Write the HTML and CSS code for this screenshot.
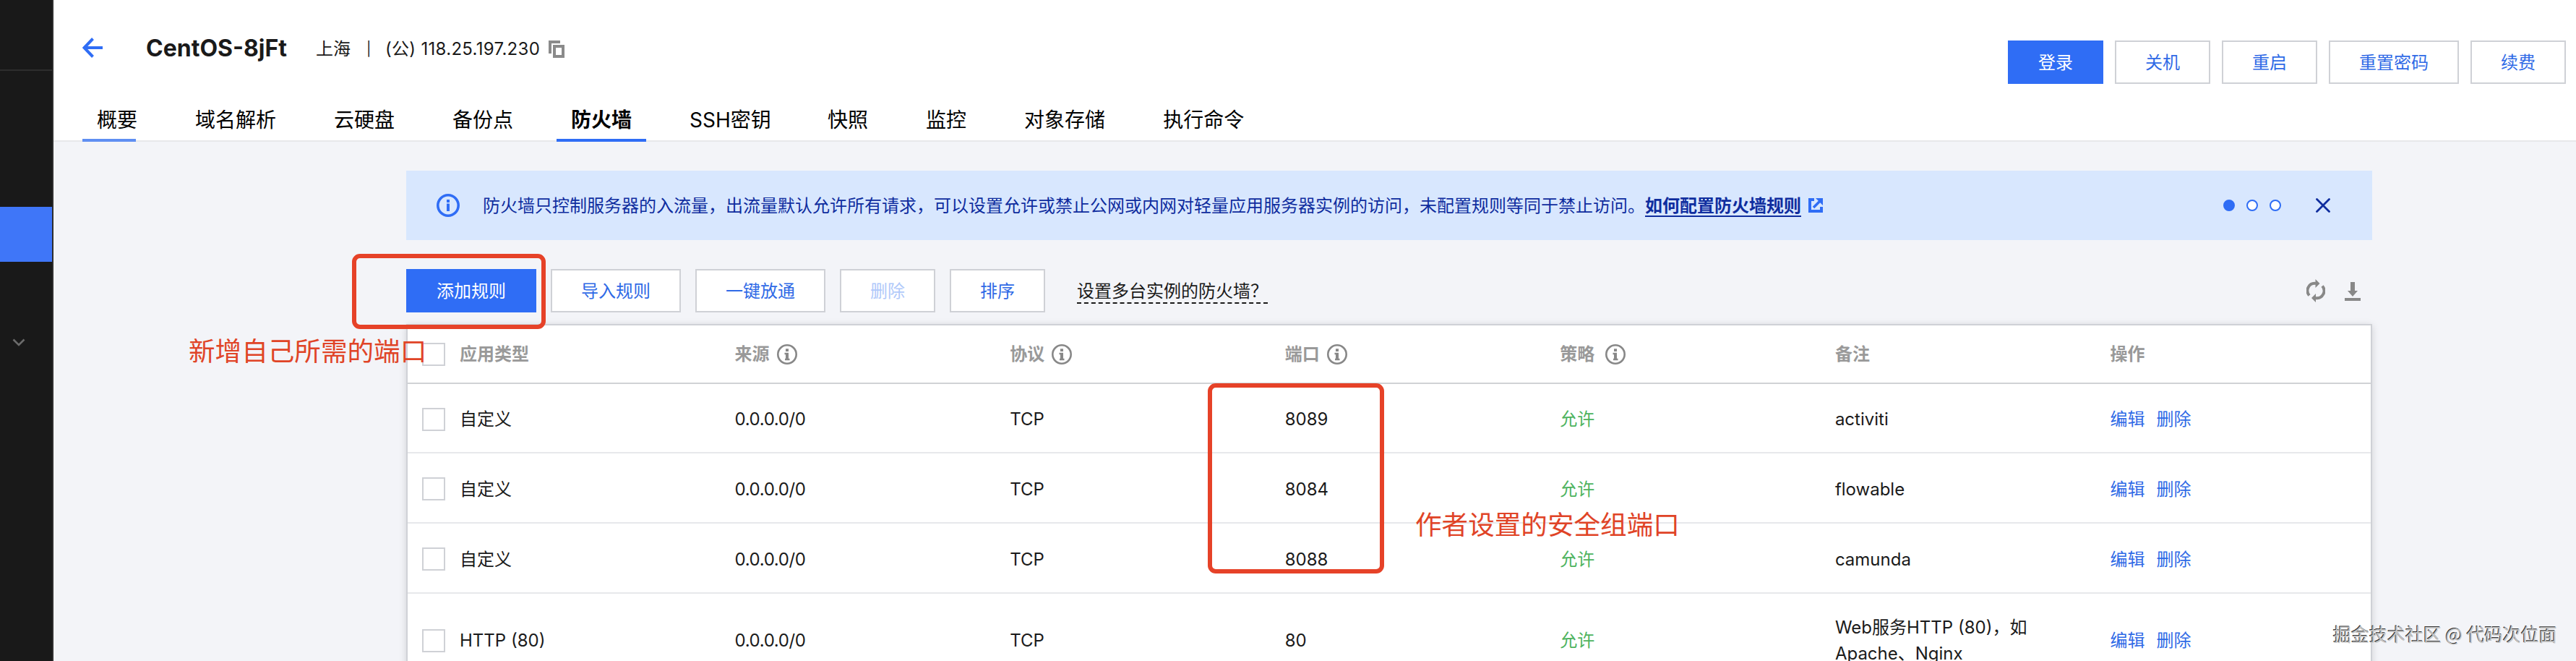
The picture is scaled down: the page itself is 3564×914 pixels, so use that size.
FILE: index.html
```
<!DOCTYPE html>
<html lang="zh-CN">
<head>
  <meta charset="UTF-8">
  <title>防火墙 - CentOS-8jFt</title>
  <link rel="stylesheet" href="styles.css">
</head>
<body>
  <!-- shared icons -->
  <svg class="sprite" width="0" height="0">
    <symbol id="icon-info" viewBox="0 0 28 28">
      <circle cx="14" cy="14" r="12.7" fill="none" stroke="currentColor" stroke-width="2.6"/>
      <path d="M12 6.200h4v3.800h-4zM10.500 11.800H16v8h1.500v2.400h-6.500v-2.400h1v-5.600h-1.500z" fill="currentColor"/>
    </symbol>
  </svg>

  <div class="app">
    <aside class="sidebar">
      <div class="side-top"></div>
      <div class="side-group"></div>
      <div class="side-active"></div>
      <svg class="side-arrow" width="18" height="12" viewBox="0 0 18 12"><path d="M1.500 1.500L9 9l7.500-7.500" fill="none" stroke="#6b6b6b" stroke-width="2.600"/></svg>
    </aside>

    <main class="main">
      <header class="header">
        <div class="header-row">
          <svg class="back" width="28" height="28" viewBox="0 0 28 28"><path d="M14.500 1.500L2.500 14l12 12.500M2.500 14H28" fill="none" stroke="#2f6df5" stroke-width="4"/></svg>
          <h1>CentOS-8jFt</h1>
          <div class="meta">
            <span class="region">上海</span>
            <span class="bar">|</span>
            <span class="ip">(公) 118.25.197.230</span>
            <svg width="22" height="24" viewBox="0 0 22 24"><path d="M2 18V2h14" fill="none" stroke="#8a8a8a" stroke-width="4"/><path d="M8 8h12v14H8z" fill="none" stroke="#8a8a8a" stroke-width="4"/></svg>
          </div>
          <div class="actions">
            <a class="btn primary">登录</a>
            <a class="btn">关机</a>
            <a class="btn">重启</a>
            <a class="btn">重置密码</a>
            <a class="btn">续费</a>
          </div>
        </div>
        <nav class="tabs">
          <a class="tab first">概要</a>
          <a class="tab">域名解析</a>
          <a class="tab">云硬盘</a>
          <a class="tab">备份点</a>
          <a class="tab active">防火墙</a>
          <a class="tab ssh">SSH密钥</a>
          <a class="tab">快照</a>
          <a class="tab">监控</a>
          <a class="tab">对象存储</a>
          <a class="tab">执行命令</a>
        </nav>
      </header>

      <section class="content">
        <div class="alert">
          <svg class="alert-icon" width="32" height="32" viewBox="0 0 32 32"><circle cx="16" cy="16" r="14.200" fill="none" stroke="#2f6df5" stroke-width="3.600"/><path d="M14 8h4v4h-4zM14 13.500h4V24h-4z" fill="#2f6df5"/></svg>
          <p>防火墙只控制服务器的入流量，出流量默认允许所有请求，可以设置允许或禁止公网或内网对轻量应用服务器实例的访问，未配置规则等同于禁止访问。<a class="help">如何配置防火墙规则</a></p>
          <svg class="external" width="20" height="20" viewBox="0 0 20 20"><path d="M8 2H2v16h16v-6" fill="none" stroke="#2f6df5" stroke-width="4"/><path d="M7 13L17 3" stroke="#2f6df5" stroke-width="3.600"/><path d="M10 0h10v10z" fill="#2f6df5"/></svg>
          <div class="dots"><i class="on"></i><i></i><i></i></div>
          <svg class="close" width="20" height="20" viewBox="0 0 20 20"><path d="M1.500 1.500l17 17M18.500 1.500l-17 17" stroke="#0f2d9e" stroke-width="2.800" stroke-linecap="round"/></svg>
        </div>

        <div class="toolbar">
          <a class="btn primary">添加规则</a>
          <a class="btn">导入规则</a>
          <a class="btn">一键放通</a>
          <a class="btn disabled">删除</a>
          <a class="btn">排序</a>
          <span class="tip">设置多台实例的防火墙？</span>
          <div class="tools">
            <svg width="26" height="32" viewBox="0 0 26 32"><path d="M4 22.500A10 10 0 0 1 13 6M22 9.500A10 10 0 0 1 13 26" fill="none" stroke="#888" stroke-width="4"/><path d="M12.500 0l6 6-6 6zM13 20l-6 6 6 6z" fill="#888"/></svg>
            <svg width="22" height="26" viewBox="0 0 22 26"><path d="M8 0h6v12h4l-7 8-7-8h4zM0 22h22v4H0z" fill="#888"/></svg>
          </div>
        </div>

        <div class="table">
          <div class="tr th">
            <div class="check"><i></i></div>
            <div class="td">应用类型</div>
            <div class="td">来源<svg class="info"><use href="#icon-info"/></svg></div>
            <div class="td">协议<svg class="info"><use href="#icon-info"/></svg></div>
            <div class="td">端口<svg class="info"><use href="#icon-info"/></svg></div>
            <div class="td wide">策略<svg class="info"><use href="#icon-info"/></svg></div>
            <div class="td">备注</div>
            <div class="td">操作</div>
          </div>
          <div class="tr row-first">
            <div class="check"><i></i></div>
            <div class="td">自定义</div>
            <div class="td source">0.0.0.0/0</div>
            <div class="td">TCP</div>
            <div class="td">8089</div>
            <div class="td allow">允许</div>
            <div class="td">activiti</div>
            <div class="td links"><a>编辑</a><a>删除</a></div>
          </div>
          <div class="tr">
            <div class="check"><i></i></div>
            <div class="td">自定义</div>
            <div class="td source">0.0.0.0/0</div>
            <div class="td">TCP</div>
            <div class="td">8084</div>
            <div class="td allow">允许</div>
            <div class="td">flowable</div>
            <div class="td links"><a>编辑</a><a>删除</a></div>
          </div>
          <div class="tr">
            <div class="check"><i></i></div>
            <div class="td">自定义</div>
            <div class="td source">0.0.0.0/0</div>
            <div class="td">TCP</div>
            <div class="td">8088</div>
            <div class="td allow">允许</div>
            <div class="td">camunda</div>
            <div class="td links"><a>编辑</a><a>删除</a></div>
          </div>
          <div class="tr row-tall">
            <div class="check"><i></i></div>
            <div class="td">HTTP (80)</div>
            <div class="td source">0.0.0.0/0</div>
            <div class="td">TCP</div>
            <div class="td">80</div>
            <div class="td allow">允许</div>
            <div class="td">Web服务HTTP (80)，如<br>Apache、Nginx</div>
            <div class="td links"><a>编辑</a><a>删除</a></div>
          </div>
        </div>
      </section>
    </main>

    <!-- annotations over the page -->
    <div class="mark mark-add"></div>
    <div class="mark mark-port"></div>
    <div class="note note-add">新增自己所需的端口</div>
    <div class="note note-port">作者设置的安全组端口</div>
    <div class="watermark">掘金技术社区 @ 代码次位面</div>
  </div>
</body>
</html>
```
FILE: styles.css
```
* {
  box-sizing: border-box;
}
body {
  margin: 0;
  background-color: #f3f4f8;
  color: #1a1a1a;
  font-family: Inter, "Noto Sans CJK SC", sans-serif;
  font-size: 24px;
  line-height: 36px;
}
.sprite {
  position: absolute;
}
.app {
  position: relative;
  display: flex;
  width: 3564px;
  height: 914px;
  overflow: hidden;
}
svg {
  flex: none;
}

/* sidebar */
.sidebar {
  width: 74px;
  flex: none;
  background-color: #191919;
  border-right: 2px solid #2e2e2e;
}
.side-top {
  height: 98px;
  border-bottom: 2px solid #2e2e2e;
}
.side-group {
  height: 188px;
}
.side-active {
  height: 76px;
  background-color: #3f76f8;
}
.side-arrow {
  display: block;
  margin: 106px 0 0 17px;
}

/* header */
.main {
  flex: 1;
}
.header {
  height: 196px;
  background-color: #fff;
  border-bottom: 2px solid #e7e8eb;
}
.header-row {
  display: flex;
  height: 132px;
  padding: 0 14px 0 40px;
}
.back {
  margin-top: 52px;
}
h1 {
  width: 196px;
  margin: 46px 0 0 60px;
  font-size: 32px;
  line-height: 42px;
  white-space: nowrap;
}
.meta {
  display: flex;
  height: 36px;
  margin: 50px 0 0 39px;
  white-space: nowrap;
}
.region {
  width: 70px;
}
.bar {
  width: 26px;
  font-size: 19px;
}
.ip {
  width: 226px;
  letter-spacing: 0.3px;
}
.meta svg {
  margin-top: 6px;
}
.actions {
  display: flex;
  gap: 16px;
  margin: 56px 0 0 auto;
}
.btn {
  height: 60px;
  padding: 0 40px;
  background-color: #fff;
  border: 2px solid #cfd1d6;
  color: #2f6ae6;
  line-height: 58px;
  white-space: nowrap;
}
.btn.primary {
  background-color: #2f6df5;
  border-color: #2f6df5;
  color: #fff;
}
.btn.disabled {
  color: #b0c9fa;
}
.tabs {
  display: flex;
  gap: 40px;
  padding-left: 40px;
}
.tab {
  height: 64px;
  padding: 0 20px;
  border-bottom: 4px solid transparent;
  color: #000;
  font-size: 28px;
  line-height: 69px;
  white-space: nowrap;
}
.ssh {
  width: 151px;
}
.first {
  background: linear-gradient(#5f8ef2, #5f8ef2) left bottom / 74px 4px no-repeat border-box;
}
.active {
  border-color: #2f6df5;
  font-weight: bold;
}

/* alert */
.content {
  width: 2720px;
  margin: 40px 0 0 488px;
}
.alert {
  display: flex;
  align-items: center;
  height: 96px;
  padding: 0 58px 0 42px;
  background-color: #d8e7fe;
  color: #0f2d9e;
}
.alert p {
  margin: 2px 0 0 32px;
  white-space: nowrap;
}
.help {
  display: inline-block;
  height: 33px;
  border-bottom: 2px solid #0f2d9e;
  font-weight: bold;
}
.external {
  margin-left: 10px;
}
.dots {
  display: flex;
  gap: 16px;
  margin: 0 48px 0 auto;
}
.dots i {
  width: 16px;
  height: 16px;
  background-color: #fff;
  border: 2px solid #2f6df5;
  border-radius: 50%;
}
.dots .on {
  background-color: #2f6df5;
}

/* toolbar */
.toolbar {
  display: flex;
  gap: 20px;
  height: 60px;
  margin: 40px 0 16px;
}
.tip {
  height: 36px;
  margin: 12px 0 0 24px;
  border-bottom: 2px dashed #1a1a1a;
  line-height: 37px;
  white-space: nowrap;
}
.tools {
  display: flex;
  gap: 27px;
  margin: 14px 16px 0 auto;
}
.tools svg + svg {
  margin-top: 4px;
}

/* table */
.table {
  height: 520px;
  background-color: #fff;
  border: 2px solid #cfd1d6;
  box-shadow: 0 2px 10px rgba(0, 0, 0, 0.14);
}
.tr {
  display: flex;
  align-items: center;
  height: 97px;
  padding-top: 3px;
  border-bottom: 2px solid #e7e8eb;
}
.check {
  width: 52px;
  padding-left: 20px;
  flex: none;
}
.check i {
  display: block;
  width: 32px;
  height: 32px;
  background-color: #fff;
  border: 2px solid #cfd1d6;
}
.td {
  display: flex;
  flex: 1 1 0;
  align-items: center;
  min-width: 0;
  padding: 1px 0 0 20px;
  white-space: nowrap;
}
.th {
  height: 81px;
  padding-top: 1px;
  border-color: #d0d2d5;
  color: #999;
  font-weight: bold;
}
.th .td {
  padding-top: 0;
}
.info {
  width: 28px;
  height: 28px;
  margin-left: 10px;
  color: #888;
}
.wide .info {
  margin-left: 15px;
}
.row-first {
  height: 96px;
}
.row-tall {
  height: 131px;
  padding-top: 0;
}
.source {
  letter-spacing: -0.4px;
}
.allow {
  color: #4db35e;
}
.links {
  gap: 16px;
  color: #2f6ae6;
}

/* annotations */
.mark {
  position: absolute;
  border: 6px solid #e64228;
  border-radius: 11px;
}
.mark-add {
  left: 487px;
  top: 351px;
  width: 268px;
  height: 104px;
}
.mark-port {
  left: 1671px;
  top: 530px;
  width: 244px;
  height: 263px;
}
.note {
  position: absolute;
  color: #e04427;
  font-size: 36.6px;
  line-height: 50px;
  white-space: nowrap;
}
.note-add {
  left: 261px;
  top: 461px;
}
.note-port {
  left: 1958px;
  top: 701px;
}
.watermark {
  position: absolute;
  left: 3228px;
  top: 858px;
  color: #c4c4c4;
  font-family: "Noto Sans CJK SC", sans-serif;
  font-size: 25px;
  text-shadow: -1px -1px 0 #333;
  white-space: nowrap;
}
```
